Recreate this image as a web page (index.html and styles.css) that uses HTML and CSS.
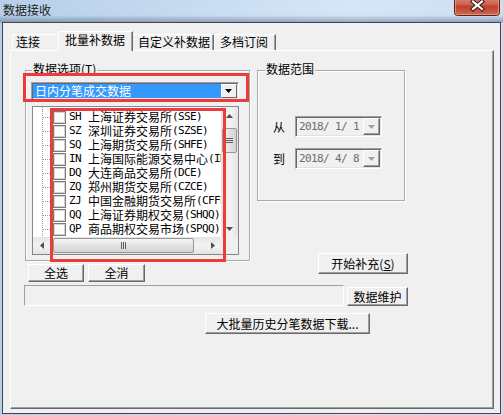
FILE: index.html
```html
<!DOCTYPE html>
<html>
<head>
<meta charset="utf-8">
<link rel="stylesheet" href="styles.css">
</head>
<body>
<div class="window">
  <div class="titlebar">
    <span class="title">数据接收</span>
    <div class="close">
      <svg width="46" height="16" viewBox="0 0 46 16">
        <defs>
          <linearGradient id="cg" x1="0" y1="0" x2="0" y2="1">
            <stop offset="0" stop-color="#dd8f7f"/>
            <stop offset="0.45" stop-color="#cf6350"/>
            <stop offset="0.55" stop-color="#bf3f2b"/>
            <stop offset="1" stop-color="#d26a52"/>
          </linearGradient>
        </defs>
        <rect x="0.5" y="-5" width="45" height="20.5" rx="3" fill="url(#cg)" stroke="#5e2219"/>
        <rect x="1.5" y="-4" width="43" height="18.5" rx="2" fill="none" stroke="#eab0a4" stroke-opacity="0.6"/>
        <path d="M19 1.5 L28 9 M28 1.5 L19 9" stroke="#3b1710" stroke-width="4.2" stroke-linecap="square"/>
        <path d="M19 1.5 L28 9 M28 1.5 L19 9" stroke="#ffffff" stroke-width="2.2" stroke-linecap="square"/>
      </svg>
    </div>
  </div>
  <div class="client">
    <div class="tabs">
      <div class="tab t1">连接</div>
      <div class="tab t2 active">批量补数据</div>
      <div class="tab t3">自定义补数据</div>
      <div class="tab t4">多档订阅</div>
    </div>
    <div class="panel">
      <div class="top">
        <div class="leftcol">
          <div class="group g1">
            <span class="glabel">数据选项(<u>T</u>)</span>
            <div class="combo">
              <div class="combo-sel">日内分笔成交数据</div>
              <div class="combo-btn">
                <svg width="8" height="4" viewBox="0 0 8 4"><path d="M0 0 H7 L3.5 4 Z" fill="#000"/></svg>
              </div>
            </div>
            <div class="tree">
              <div class="rows">
                <div class="row"><i class="br"></i><i class="chk"></i><span class="code">SH</span><span class="cn">上海证券交易所</span><span class="mono">(SSE)</span></div>
                <div class="row"><i class="br"></i><i class="chk"></i><span class="code">SZ</span><span class="cn">深圳证券交易所</span><span class="mono">(SZSE)</span></div>
                <div class="row"><i class="br"></i><i class="chk"></i><span class="code">SQ</span><span class="cn">上海期货交易所</span><span class="mono">(SHFE)</span></div>
                <div class="row"><i class="br"></i><i class="chk"></i><span class="code">IN</span><span class="cn">上海国际能源交易中心</span><span class="mono">(INE)</span></div>
                <div class="row"><i class="br"></i><i class="chk"></i><span class="code">DQ</span><span class="cn">大连商品交易所</span><span class="mono">(DCE)</span></div>
                <div class="row"><i class="br"></i><i class="chk"></i><span class="code">ZQ</span><span class="cn">郑州期货交易所</span><span class="mono">(CZCE)</span></div>
                <div class="row"><i class="br"></i><i class="chk"></i><span class="code">ZJ</span><span class="cn">中国金融期货交易所</span><span class="mono">(CFFEX)</span></div>
                <div class="row"><i class="br"></i><i class="chk"></i><span class="code">QQ</span><span class="cn">上海证券期权交易</span><span class="mono">(SHQQ)</span></div>
                <div class="row"><i class="br"></i><i class="chk"></i><span class="code">QP</span><span class="cn">商品期权交易市场</span><span class="mono">(SPQQ)</span></div>
                <div class="row"><i class="br"></i><i class="chk"></i><span class="code">HK</span><span class="cn">香港联合交易所</span><span class="mono">(HKEX)</span></div>
              </div>
              <div class="vscroll">
                <div class="sb-btn"><svg width="7" height="4" viewBox="0 0 7 4"><path d="M3.5 0 L7 4 H0 Z" fill="#505050"/></svg></div>
                <div class="vthumb"><span class="grip-h"></span></div>
                <div class="sb-fill"></div>
                <div class="sb-btn"><svg width="7" height="4" viewBox="0 0 7 4"><path d="M0 0 H7 L3.5 4 Z" fill="#505050"/></svg></div>
              </div>
              <div class="hscroll">
                <div class="sb-btn"><svg width="4" height="7" viewBox="0 0 4 7"><path d="M4 0 V7 L0 3.5 Z" fill="#505050"/></svg></div>
                <div class="hthumb"><span class="grip-v"></span></div>
                <div class="sb-fill"></div>
                <div class="sb-btn"><svg width="4" height="7" viewBox="0 0 4 7"><path d="M0 0 V7 L4 3.5 Z" fill="#505050"/></svg></div>
              </div>
              <div class="corner"></div>
            </div>
          </div>
          <div class="btnrow">
            <button class="btn b-all">全选</button>
            <button class="btn b-none">全消</button>
          </div>
        </div>
        <div class="rightcol">
          <div class="group g2">
            <span class="glabel">数据范围</span>
            <div class="daterow first">
              <span class="dlabel">从</span>
              <div class="date"><span class="dtext">2018/ 1/ 1</span><div class="dbtn"><svg width="7" height="4" viewBox="0 0 7 4"><path d="M0 0 H7 L3.5 4 Z" fill="#a0a0a0"/></svg></div></div>
            </div>
            <div class="daterow">
              <span class="dlabel">到</span>
              <div class="date"><span class="dtext">2018/ 4/ 8</span><div class="dbtn"><svg width="7" height="4" viewBox="0 0 7 4"><path d="M0 0 H7 L3.5 4 Z" fill="#a0a0a0"/></svg></div></div>
            </div>
          </div>
          <button class="btn b-start">开始补充(<u>S</u>)</button>
        </div>
      </div>
      <div class="row2">
        <div class="status"></div>
        <button class="btn b-maint">数据维护</button>
      </div>
      <div class="row3">
        <button class="btn b-bulk">大批量历史分笔数据下载...</button>
      </div>
    </div>
  </div>
  <div class="redbox r1"></div>
  <div class="redbox r2"></div>
</div>
</body>
</html>
```

FILE: styles.css
```css
* { box-sizing: border-box; }
html, body { margin: 0; padding: 0; }
body {
  width: 503px;
  height: 415px;
  overflow: hidden;
  font-family: "Noto Sans CJK SC", sans-serif;
  font-size: 12px;
  color: #000;
}
.window {
  position: relative;
  width: 503px;
  height: 415px;
  display: flex;
  flex-direction: column;
  background:
    linear-gradient(to bottom, rgba(255,255,255,0) 0px, rgba(255,255,255,0) 15px, rgba(70,90,115,0.45) 22px, rgba(255,255,255,0) 23px),
    linear-gradient(90deg, #b7cfe9 0%, #c6daef 35%, #d6e6f6 70%, #cbdef2 100%);
}
.titlebar {
  height: 22px;
  flex: none;
  display: flex;
  justify-content: space-between;
  align-items: flex-start;
  padding-left: 3px;
}
.title { line-height: 20px; color: #1b1b1b; }
.close { width: 46px; height: 16px; margin-right: 3px; }
.close svg { display: block; }

.client {
  flex: 1;
  margin: 0 2px 1px 2px;
  background: #f0f0f0;
  border: 1px solid #3d4654;
  padding: 8px 0 0 7px;
}
.tabs {
  position: relative;
  z-index: 1;
  display: flex;
  align-items: flex-end;
  height: 20px;
  margin-bottom: -1px;
}
.tab {
  height: 16px;
  margin-bottom: 1px;
  line-height: 14px;
  background: #f0f0f0;
  border-top: 1px solid #fff;
  border-left: 1px solid #fff;
  border-right: 1px solid #696969;
  box-shadow: inset -1px 0 0 #a0a0a0;
  white-space: nowrap;
}
.t1 { margin-left: 2px; width: 46px; padding-left: 3px; border-right: none; box-shadow: none; }
.t2 { width: 75px; height: 20px; margin-bottom: 0; padding: 1px 0 0 6px; }
.t3 { width: 81px; padding-left: 5px; border-left: none; }
.t4 { width: 62px; padding-left: 5px; }

.panel {
  width: 484px;
  height: 359px;
  border-top: 1px solid #fff;
  border-left: 1px solid #fff;
  border-right: 1px solid #696969;
  border-bottom: 1px solid #696969;
  box-shadow: inset -1px -1px 0 #a0a0a0;
}
.top {
  display: flex;
  align-items: flex-start;
  gap: 7px;
  padding: 19px 0 0 14px;
}
.leftcol, .rightcol { display: flex; flex-direction: column; align-items: flex-start; }

.group {
  position: relative;
  border: 1px solid #a9a9a9;
  box-shadow: inset 1px 1px 0 #fff, 1px 1px 0 #fff;
}
.glabel {
  position: absolute;
  top: -8px;
  line-height: 12px;
  background: #f0f0f0;
  padding: 0 1px;
  white-space: nowrap;
}
.g1 { width: 225px; height: 191px; padding: 11px 0 0 5px; }
.g1 .glabel { left: 6px; }
.g2 { width: 148px; height: 131px; padding: 45px 0 0 15px; }
.g2 .glabel { left: 7px; }

.combo {
  display: flex;
  width: 208px;
  height: 18px;
  padding: 1px;
  border: 1px solid;
  border-color: #a0a0a0 #fff #fff #a0a0a0;
  box-shadow: inset 1px 1px 0 #696969, inset -1px -1px 0 #e3e3e3;
  background: #fff;
}
.combo-sel {
  width: 188px;
  height: 14px;
  background: #3399ff;
  color: #fff;
  line-height: 14px;
  padding-left: 2px;
}
.combo-btn {
  width: 16px;
  height: 14px;
  display: flex;
  align-items: center;
  justify-content: center;
  background: #f0f0f0;
  border: 1px solid;
  border-color: #fff #696969 #696969 #fff;
}
.combo-btn svg { display: block; }

.tree {
  margin: 6px 0 0 1px;
  width: 207px;
  height: 149px;
  border: 1px solid #828790;
  background: #fff;
  display: grid;
  grid-template-columns: 188px 17px;
  grid-template-rows: 130px 17px;
}
.rows {
  overflow: hidden;
  padding-top: 3px;
  background-image: linear-gradient(#9a9a9a 50%, transparent 50%);
  background-size: 1px 2px;
  background-repeat: repeat-y;
  background-position: 9px 0;
}
.row {
  display: flex;
  align-items: center;
  height: 14px;
  line-height: 14px;
  white-space: nowrap;
}
.br {
  flex: none;
  width: 8px;
  height: 1px;
  margin-left: 10px;
  background-image: linear-gradient(90deg, #9a9a9a 50%, transparent 50%);
  background-size: 2px 1px;
}
.chk {
  flex: none;
  width: 13px;
  height: 13px;
  margin-left: 2px;
  border: 1px solid #7b7b7b;
  box-shadow: inset 0 0 0 1px #d4d4d4;
  background: #fff;
}
.code {
  flex: none;
  width: 19px;
  margin-left: 3px;
  font-family: "DejaVu Sans Mono", monospace;
  font-size: 11px;
  letter-spacing: -0.62px;
}
.cn { flex: none; }
.mono {
  flex: none;
  font-family: "DejaVu Sans Mono", monospace;
  font-size: 11px;
  letter-spacing: -0.62px;
}

.vscroll {
  display: flex;
  flex-direction: column;
  background: linear-gradient(90deg, #e4e4e4, #f1f1f1 40%, #f1f1f1 60%, #e4e4e4);
}
.hscroll {
  display: flex;
  background: linear-gradient(180deg, #e4e4e4, #f1f1f1 40%, #f1f1f1 60%, #e4e4e4);
}
.sb-btn {
  flex: none;
  width: 17px;
  height: 17px;
  display: flex;
  align-items: center;
  justify-content: center;
}
.sb-btn svg { display: block; }
.sb-fill { flex: 1; }
.vthumb {
  flex: none;
  height: 25px;
  margin: 4px 1px 0 1px;
  border: 1px solid #979797;
  border-radius: 2px;
  background: linear-gradient(90deg, #f5f5f5, #e2e2e2 50%, #d3d3d3);
  display: flex;
  align-items: center;
  justify-content: center;
}
.grip-h {
  width: 7px;
  height: 5px;
  background: repeating-linear-gradient(180deg, #5e5e5e 0 1px, transparent 1px 2px);
}
.hthumb {
  flex: none;
  width: 141px;
  margin: 1px 0 1px 3px;
  border: 1px solid #979797;
  border-radius: 2px;
  background: linear-gradient(180deg, #f5f5f5, #e2e2e2 50%, #d3d3d3);
  display: flex;
  align-items: center;
  justify-content: center;
}
.grip-v {
  width: 5px;
  height: 7px;
  background: repeating-linear-gradient(90deg, #5e5e5e 0 1px, transparent 1px 2px);
}
.corner { background: #f0f0f0; }

.daterow {
  display: flex;
  align-items: center;
  height: 21px;
}
.daterow + .daterow { margin-top: 11px; }
.dlabel { width: 12px; margin-right: 10px; line-height: 14px; }
.date {
  display: flex;
  align-items: center;
  justify-content: space-between;
  width: 87px;
  height: 21px;
  padding: 1px;
  border: 1px solid;
  border-color: #a0a0a0 #fff #fff #a0a0a0;
  box-shadow: inset 1px 1px 0 #696969, inset -1px -1px 0 #e3e3e3;
  background: #f0f0f0;
}
.dtext {
  padding-left: 2px;
  font-family: "DejaVu Sans Mono", monospace;
  font-size: 11px;
  letter-spacing: -0.62px;
  color: #6d6d6d;
  white-space: pre;
}
.dbtn {
  width: 17px;
  height: 17px;
  display: flex;
  align-items: center;
  justify-content: center;
  border: 1px solid;
  border-color: #fff #696969 #696969 #fff;
  box-shadow: inset -1px -1px 0 #a0a0a0;
  background: #f0f0f0;
}
.dbtn svg { display: block; }

.btn {
  font-family: "Noto Sans CJK SC", sans-serif;
  font-size: 12px;
  color: #000;
  background: #f0f0f0;
  border: 1px solid;
  border-color: #fff #696969 #696969 #fff;
  box-shadow: inset -1px -1px 0 #a0a0a0;
  padding: 0;
  margin: 0;
  line-height: 14px;
  display: flex;
  align-items: center;
  justify-content: center;
  white-space: nowrap;
}
.btnrow { display: flex; margin: 3px 0 0 3px; gap: 4px; }
.b-all { width: 56px; height: 18px; }
.b-none { width: 57px; height: 18px; }
.b-start { width: 90px; height: 21px; margin: 52px 0 0 61px; }

.row2 {
  display: flex;
  align-items: flex-end;
  margin-top: 3px;
  padding-left: 13px;
}
.status {
  width: 320px;
  height: 21px;
  border: 1px solid;
  border-color: #a0a0a0 #fff #fff #a0a0a0;
  background: #f0f0f0;
}
.b-maint { width: 61px; height: 19px; margin-left: 3px; }
.row3 { margin-top: 7px; padding-left: 194px; }
.b-bulk { width: 165px; height: 21px; }

.redbox {
  position: absolute;
  border: 3px solid #ef3a3a;
  pointer-events: none;
}
.r1 { left: 23px; top: 73px; width: 226px; height: 29px; }
.r2 { left: 50px; top: 108px; width: 176px; height: 154px; }
```
